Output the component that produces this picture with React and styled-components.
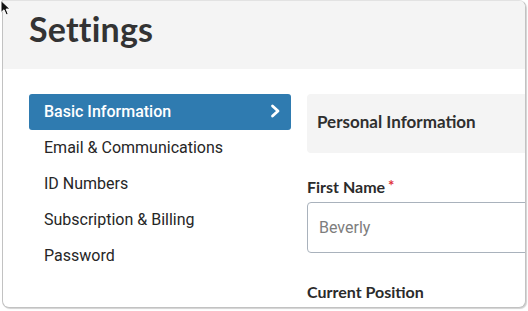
import React from "react";
import styled, { createGlobalStyle } from "styled-components";

const Global = createGlobalStyle`
  html, body { margin: 0; padding: 0; background: #ffffff; }
  body { font-family: "Liberation Sans", Arial, sans-serif; }
`;

const Stage = styled.div`
  position: relative;
  width: 528px;
  height: 311px;
  overflow: hidden;
`;

const Window = styled.div`
  margin-left: 2px;
  width: 524px;
  height: 308px;
  box-sizing: border-box;
  border: 1px solid #c2c2c2;
  border-top: 1px solid #e2e2e2;
  border-radius: 0 7px 7px 7px;
  box-shadow: 1px 1px 1px rgba(0, 0, 0, 0.18);
  overflow: hidden;
  background: #fff;
  display: flex;
  flex-direction: column;
`;

const Header = styled.header`
  height: 68px;
  flex: none;
  background: #f4f4f4;
  display: flex;
  align-items: center;
  padding-left: 26px;
`;

const Title = styled.h1`
  margin: 0;
  margin-top: -14px;
  font-family: Lato, "Open Sans", sans-serif;
  font-weight: 700;
  font-size: 34px;
  color: #333333;
  letter-spacing: 0.2px;
`;

const Body = styled.div`
  display: flex;
  gap: 16px;
  padding: 25px 0 0 26px;
`;

const Sidebar = styled.nav`
  width: 262px;
  flex: none;
  display: flex;
  flex-direction: column;
`;

const NavItem = styled.div`
  height: 36px;
  box-sizing: border-box;
  display: flex;
  align-items: center;
  justify-content: space-between;
  padding: 0 10px 2px 15px;
  border-radius: 3px;
  font-family: Roboto, "Liberation Sans", sans-serif;
  font-size: 16px;
  color: ${(p) => (p.$active ? "#ffffff" : "#262626")};
  background: ${(p) => (p.$active ? "#2f7bb0" : "transparent")};
  font-weight: ${(p) => (p.$active ? 500 : 400)};
`;

const Main = styled.section`
  flex: 1;
  margin-right: -30px;
  display: flex;
  flex-direction: column;
`;

const SectionBox = styled.div`
  height: 59px;
  box-sizing: border-box;
  padding-bottom: 4px;
  border-radius: 4px;
  background: #f4f4f4;
  display: flex;
  align-items: center;
  padding-left: 10px;
  font-family: Lato, "Open Sans", sans-serif;
  font-weight: 700;
  font-size: 17px;
  color: #2f2f2f;
`;

const Label = styled.div`
  font-family: Lato, "Open Sans", sans-serif;
  font-weight: 700;
  font-size: 16px;
  color: #2b2b2b;
  margin-top: ${(p) => p.$top}px;
  height: 18px;
  line-height: 18px;
`;

const Star = styled.span`
  color: #e0303a;
  margin-left: 3px;
  font-size: 15px;
  vertical-align: 2px;
`;

const Input = styled.div`
  margin-top: 8px;
  height: 51px;
  box-sizing: border-box;
  border: 1px solid #a9b2bc;
  border-radius: 4px;
  display: flex;
  align-items: center;
  padding-left: 11px;
  font-family: Roboto, "Liberation Sans", sans-serif;
  font-size: 16px;
  color: #7d7d7d;
`;

const Cursor = styled.svg`
  position: absolute;
  left: 0;
  top: 0;
`;

export default function App() {
  const items = [
    "Basic Information",
    "Email & Communications",
    "ID Numbers",
    "Subscription & Billing",
    "Password",
  ];
  return (
    <Stage>
      <Global />
      <Window>
        <Header>
          <Title>Settings</Title>
        </Header>
        <Body>
          <Sidebar>
            {items.map((t, i) => (
              <NavItem key={t} $active={i === 0}>
                <span>{t}</span>
                {i === 0 && (
                  <svg width="11" height="14" viewBox="0 0 11 14">
                    <path d="M2.5 2 L8 7 L2.5 12" fill="none" stroke="#fff" strokeWidth="2.8" strokeLinecap="round" strokeLinejoin="round" />
                  </svg>
                )}
              </NavItem>
            ))}
          </Sidebar>
          <Main>
            <SectionBox>Personal Information</SectionBox>
            <Label $top={23}>
              First Name<Star>*</Star>
            </Label>
            <Input>Beverly</Input>
            <Label $top={30}>Current Position</Label>
          </Main>
        </Body>
      </Window>
      <Cursor width="12" height="16" viewBox="0 0 12 16">
        <path d="M1 0.5 L1 12.5 L4 9.8 L6.2 14.8 L8.2 13.9 L6.1 9.1 L10 9.1 Z" fill="#111" stroke="#fff" strokeWidth="1" strokeLinejoin="round" />
      </Cursor>
    </Stage>
  );
}
